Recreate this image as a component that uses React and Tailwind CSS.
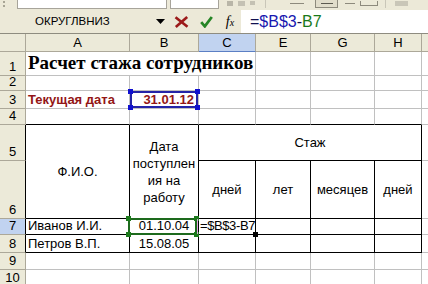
import React from "react";

const G = "border-r border-b border-[#c0c0c0]";
const T = "border-r border-b border-black";
const R4 = "border-r border-b border-r-[#c0c0c0] border-b-black";
const cell = "flex items-end px-[2px] pb-[1px] leading-[15px] whitespace-nowrap overflow-hidden";

function ColHead({ label, active }) {
    return (
        <div className={active
            ? "flex items-center justify-center border-r border-b border-r-[#aca899] border-b-[#5b7fc4] bg-[#c1d3f0] text-[13px]"
            : "flex items-center justify-center border-r border-b border-[#aca899] bg-[#ecead9] text-[13px]"}>
            {label}
        </div>
    )
}

function RowHead({ n, active, dark }) {
    let cls = "flex items-end justify-center pb-[1px] leading-[15px] border-b border-b-[#aca899] border-r text-[13px] "
    cls += dark ? "border-r-black " : "border-r-[#aca899] "
    cls += active ? "bg-[#c1d3f0]" : "bg-[#ecead9]"
    return <div className={cls}>{n}</div>
}

function Handle({ className }) {
    return <div className={"absolute w-[5px] h-[5px] " + className}></div>
}

export default function App() {
    return (
        <div className="w-[428px] h-[284px] overflow-hidden bg-white font-['Liberation_Sans',Arial,sans-serif] text-[13px] text-black">
            {/* toolbar remnant */}
            <div className="h-[10px] bg-[#ece9d8] flex items-start">
                <div className="ml-[3px] w-[3px] h-[9px] flex flex-col gap-[2px] pt-[1px]">
                    <div className="w-[2px] h-[2px] bg-[#a8a595]"></div>
                    <div className="w-[2px] h-[2px] bg-[#a8a595]"></div>
                </div>
                <div className="ml-[11px] w-[150px] h-[9px] bg-white border-x border-b border-[#a7a49a]"></div>
                <div className="ml-[3px] w-[49px] h-[9px] bg-white border-x border-b border-[#a7a49a]"></div>
                <div className="ml-[8px] flex items-start gap-[5px] pt-[1px]">
                    <div className="w-[6px] h-[5px] bg-[#b9b6a8]"></div>
                    <div className="w-[7px] h-[5px] bg-[#c4c1b3]"></div>
                    <div className="w-[5px] h-[4px] bg-[#c4c1b3]"></div>
                </div>
                <div className="ml-[10px] w-px h-[8px] bg-[#c9c6b8]"></div>
                <div className="ml-[24px] mt-[3px] w-[14px] h-px bg-[#8d8a7d]"></div>
                <div className="ml-[11px] w-[23px] h-[8px] bg-[#e1ddcb] border-x border-b border-[#8d8a7d] flex justify-center">
                    <div className="mt-[3px] w-[12px] h-px bg-[#5c5a50]"></div>
                </div>
                <div className="ml-[7px] mt-[3px] w-[10px] h-px bg-[#8d8a7d]"></div>
                <div className="ml-[5px] mt-[1px] w-[18px] h-[5px] border border-t-0 border-[#8d8a7d]"></div>
                <div className="ml-[7px] w-px h-[8px] bg-[#c9c6b8]"></div>
                <div className="ml-[9px] mt-[1px] w-[13px] h-[5px] bg-[#c9c6b8]"></div>
            </div>

            {/* formula bar */}
            <div className="h-[24px] bg-[#ece9d8] border-b border-[#8e8c80] flex">
                <div className="w-[153px] pl-[35px] flex items-center text-[11.5px]">ОКРУГЛВНИЗ</div>
                <div className="w-[14px] flex items-center justify-center">
                    <svg width="9" height="5" viewBox="0 0 9 5"><path d="M0 0h9L4.5 5z" fill="#000" /></svg>
                </div>
                <div className="w-[29px] flex items-center justify-center">
                    <svg width="15" height="12" viewBox="0 0 15 12">
                        <path d="M1.5 1.2L13.5 10.8M13.2 1L1.8 11" stroke="#9c1a1a" strokeWidth="2.6" fill="none" />
                    </svg>
                </div>
                <div className="w-[21px] flex items-center justify-center">
                    <svg width="13" height="12" viewBox="0 0 13 12">
                        <path d="M1.2 6.2L4.8 10.3L11.8 1" stroke="#268526" strokeWidth="2.8" fill="none" />
                    </svg>
                </div>
                <div className="w-[2px]"></div>
                <div className="w-[22px] flex items-center justify-center font-['Liberation_Serif',serif] italic text-[14px] leading-none">
                    f<span className="text-[10px] mt-[3px]">x</span>
                </div>
                <div className="flex-1 bg-white flex items-center pl-[9px] text-[16px] whitespace-nowrap">
                    <span className="text-[#101050]">=</span>
                    <span className="text-[#1818b0]">$B$3</span>
                    <span className="text-[#101050]">-</span>
                    <span className="text-[#1a7a1a]">B7</span>
                </div>
            </div>

            {/* sheet */}
            <div className="grid grid-cols-[26px_104px_69px_57px_55px_64px_47px_7px] grid-rows-[18px_24px_15px_18px_16px_36px_58px_16px_18px_17px_17px]">
                <div className="border-r border-b border-[#aca899] bg-[#ecead9]"></div>
                <ColHead label="A" />
                <ColHead label="B" />
                <ColHead label="C" active />
                <ColHead label="E" />
                <ColHead label="G" />
                <ColHead label="H" />
                <ColHead label="" />

                {/* row 1 */}
                <RowHead n="1" />
                <div className={`${G} col-span-3 flex items-end px-[2px] pb-[2px] whitespace-nowrap font-['Liberation_Serif',serif] font-bold text-[19px] leading-[20px]`}>
                    Расчет стажа сотрудников
                </div>
                <div className={G}></div>
                <div className={G}></div>
                <div className={G}></div>
                <div className={G}></div>

                {/* row 2 */}
                <RowHead n="2" />
                <div className={G}></div>
                <div className={G}></div>
                <div className={G}></div>
                <div className={G}></div>
                <div className={G}></div>
                <div className={G}></div>
                <div className={G}></div>

                {/* row 3 */}
                <RowHead n="3" />
                <div className={`${G} ${cell} font-bold text-[#931616]`}>Текущая дата</div>
                <div className={`${G} ${cell} justify-end pr-[4px] font-bold text-[#931616] relative overflow-visible`}>
                    31.01.12
                    <div className="absolute inset-0 border-2 border-[#2424a8]">
                        <Handle className="-left-[4px] -top-[4px] bg-[#1010d0]" />
                        <Handle className="-right-[4px] -top-[4px] bg-[#1010d0]" />
                        <Handle className="-left-[4px] -bottom-[4px] bg-[#1010d0]" />
                        <Handle className="-right-[4px] -bottom-[4px] bg-[#1010d0]" />
                    </div>
                </div>
                <div className={G}></div>
                <div className={G}></div>
                <div className={G}></div>
                <div className={G}></div>
                <div className={G}></div>

                {/* row 4 */}
                <RowHead n="4" />
                <div className={R4}></div>
                <div className={R4}></div>
                <div className={R4}></div>
                <div className={R4}></div>
                <div className={R4}></div>
                <div className={R4}></div>
                <div className={G}></div>

                {/* row 5-6 */}
                <RowHead n="5" dark />
                <div className={`${T} row-span-2 flex items-center justify-center`}>Ф.И.О.</div>
                <div className={`${T} row-span-2 flex items-center justify-center text-center leading-[17px]`}>
                    <div>Дата<br />поступлен<br />ия на<br />работу</div>
                </div>
                <div className={`${T} col-span-4 flex items-center justify-center`}>Стаж</div>
                <div className={G}></div>

                <RowHead n="6" dark />
                <div className={`${T} flex items-center justify-center`}>дней</div>
                <div className={`${T} flex items-center justify-center`}>лет</div>
                <div className={`${T} flex items-center justify-center`}>месяцев</div>
                <div className={`${T} flex items-center justify-center`}>дней</div>
                <div className={G}></div>

                {/* row 7 */}
                <RowHead n="7" dark active />
                <div className={`${T} ${cell}`}>Иванов И.И.</div>
                <div className={`${T} ${cell} justify-center relative overflow-visible`}>
                    01.10.04
                    <div className="absolute -left-[2px] right-[1px] -top-[1px] -bottom-[1px] border-2 border-[#1d6a1d]">
                        <Handle className="-left-[4px] -top-[4px] bg-[#1d7a1d]" />
                        <Handle className="-right-[4px] -top-[4px] bg-[#1d7a1d]" />
                        <Handle className="-left-[4px] -bottom-[4px] bg-[#1d7a1d]" />
                        <Handle className="-right-[4px] -bottom-[4px] bg-[#1d7a1d]" />
                    </div>
                </div>
                <div className={`${T} flex items-end pl-[1px] pb-[1px] leading-[15px] whitespace-nowrap relative`}>
                    <div className="absolute -left-[2px] top-0 bottom-0 w-px bg-[#e2a6e2]"></div>
                    <span className="tracking-[-0.4px]">=$B$3-B7</span>
                    <div className="absolute -right-[3px] -bottom-[3px] w-[5px] h-[5px] bg-black"></div>
                </div>
                <div className={T}></div>
                <div className={T}></div>
                <div className={T}></div>
                <div className={G}></div>

                {/* row 8 */}
                <RowHead n="8" dark />
                <div className={`${T} ${cell}`}>Петров В.П.</div>
                <div className={`${T} ${cell} justify-center`}>15.08.05</div>
                <div className={T}></div>
                <div className={T}></div>
                <div className={T}></div>
                <div className={T}></div>
                <div className={G}></div>

                {/* row 9 */}
                <RowHead n="9" />
                <div className={G}></div>
                <div className={G}></div>
                <div className={G}></div>
                <div className={G}></div>
                <div className={G}></div>
                <div className={G}></div>
                <div className={G}></div>

                {/* row 10 */}
                <RowHead n="10" />
                <div className={G}></div>
                <div className={G}></div>
                <div className={G}></div>
                <div className={G}></div>
                <div className={G}></div>
                <div className={G}></div>
                <div className={G}></div>
            </div>
        </div>
    );
}
